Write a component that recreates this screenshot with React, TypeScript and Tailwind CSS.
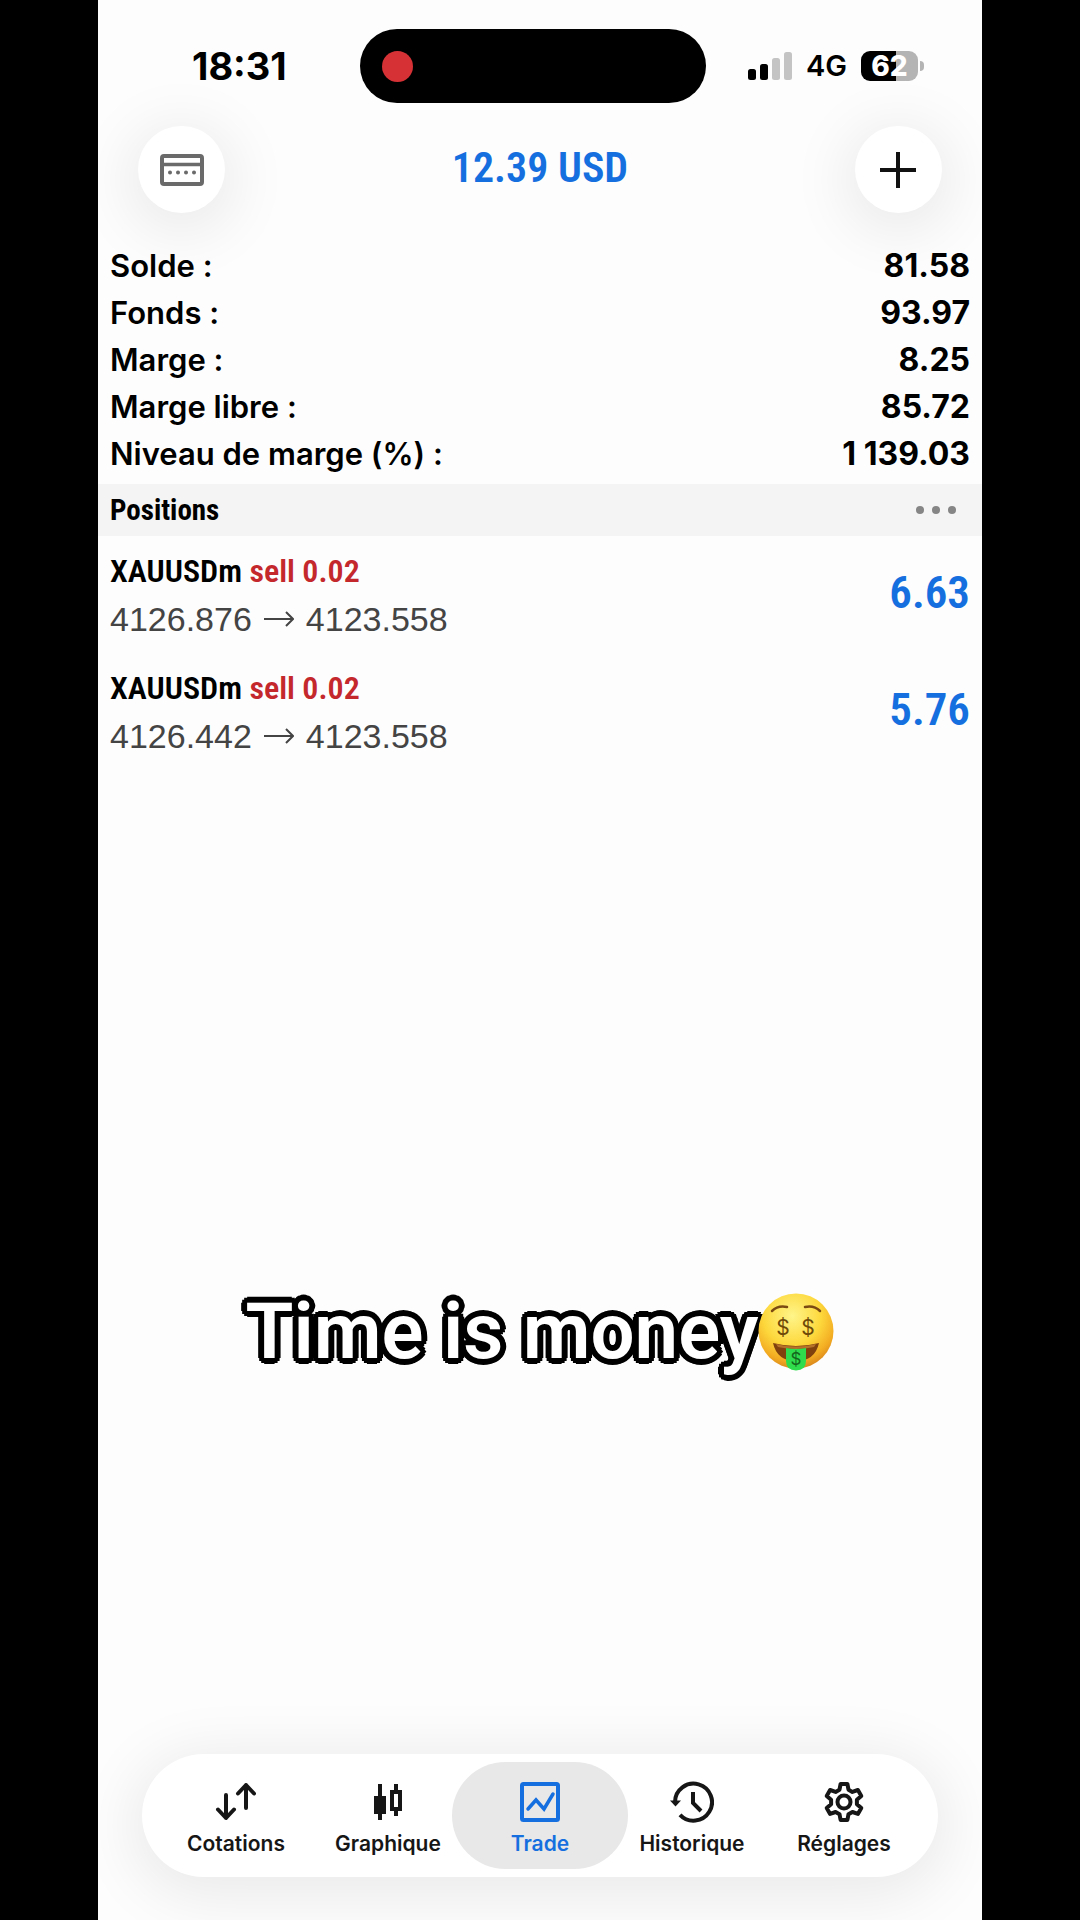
import {useState} from "react";
import type {ReactNode} from "react";

interface Position {
    id: number;
    symbol: string;
    side: string;
    volume: string;
    open: string;
    current: string;
    profit: string;
}

interface Tab {
    name: string;
    icon: ReactNode;
}

const account = [
    {label: "Solde :", value: "81.58"},
    {label: "Fonds :", value: "93.97"},
    {label: "Marge :", value: "8.25"},
    {label: "Marge libre :", value: "85.72"},
    {label: "Niveau de marge (%) :", value: "1\u00a0139.03"},
];

const positions: Position[] = [
    {id: 1, symbol: "XAUUSDm", side: "sell", volume: "0.02", open: "4126.876", current: "4123.558", profit: "6.63"},
    {id: 2, symbol: "XAUUSDm", side: "sell", volume: "0.02", open: "4126.442", current: "4123.558", profit: "5.76"},
];

const tabs: Tab[] = [
    {
        name: "Cotations",
        icon: (
            <svg viewBox="0 0 44 44" className="h-11 w-11" fill="none" stroke="currentColor" strokeWidth="4" strokeLinecap="round" strokeLinejoin="round">
                <path d="M12 15v23M4 29.500l8 8.500 8-8.500M32 28V5M24 13.500L32 5l8 8.500" />
            </svg>
        ),
    },
    {
        name: "Graphique",
        icon: (
            <svg viewBox="0 0 44 44" className="h-11 w-11" fill="none" stroke="currentColor" strokeWidth="4">
                <path d="M14 4v36M30 4v6M30 30v6" />
                <path d="M8 16h12v18H8z" fill="currentColor" stroke="none" />
                <path d="M26 12h8v17h-8z" />
            </svg>
        ),
    },
    {
        name: "Trade",
        icon: (
            <svg viewBox="0 0 44 44" className="h-11 w-11" fill="none" stroke="currentColor" strokeWidth="4">
                <rect x="4" y="4" width="36" height="36" rx="1.500" />
                <path d="M10 29l8-9 8 9 9-15" strokeWidth="3.500" strokeLinecap="round" />
            </svg>
        ),
    },
    {
        name: "Historique",
        icon: (
            <svg viewBox="0 0 44 44" className="h-11 w-11" fill="none" stroke="currentColor" strokeWidth="4">
                <path d="M5 22a18.500 18.500 0 1 1 5 12.800" />
                <path d="M23 12v11l8 8" />
                <path d="M0 20.500h11l-5.500 6z" fill="currentColor" stroke="none" />
            </svg>
        ),
    },
    {
        name: "Réglages",
        icon: (
            <svg viewBox="0 0 44 44" className="h-11 w-11" fill="none" stroke="currentColor" strokeWidth="4" strokeLinejoin="round">
                <path d="M18.600 4h6.800l1.100 5.700 3.900 2.200 5.500-1.900 3.400 5.900-4.400 3.800v4.500l4.400 3.800-3.400 5.900-5.500-1.900-3.900 2.200-1.100 5.800h-6.800l-1.100-5.800-3.900-2.200-5.500 1.900L4.700 28l4.400-3.800v-4.500l-4.400-3.800L8.100 10l5.500 1.900 3.900-2.200z" />
                <circle cx="22" cy="22" r="6.500" />
            </svg>
        ),
    },
];

const StatusBar = () => (
    <div className="grid grid-cols-[minmax(0,1fr)_346px_minmax(0,1fr)] items-center pt-7 pr-3.5">
        <span className="pl-[94px] text-[38px] leading-[76px] font-bold text-black">18:31</span>
        <div className="flex h-[74px] items-center rounded-full bg-black pl-[22px]">
            <span className="h-[31px] w-[31px] rounded-full bg-[#d63236]" />
        </div>
        <div className="flex items-center gap-3.5 pl-[42px]">
            <svg viewBox="0 0 44 28" className="h-7 w-11 shrink-0">
                <rect x="0" y="17" width="8" height="11" rx="2.500" />
                <rect x="12" y="12" width="8" height="16" rx="2.500" />
                <rect x="24" y="6" width="8" height="22" rx="2.500" fill="#c4c4c4" />
                <rect x="36" y="0" width="8" height="28" rx="2.500" fill="#c4c4c4" />
            </svg>
            <span className="text-[29px] leading-8 font-semibold text-black">4G</span>
            <div className="flex items-center gap-0.5">
                <span className="flex h-[30px] w-[57px] shrink-0 items-center justify-center rounded-[9px] bg-linear-to-r from-black from-62% to-[#b4b4b4] to-62% text-[28px] leading-[30px] font-extrabold text-white">
                    62
                </span>
                <span className="h-2.5 w-1 rounded-r-full bg-[#b4b4b4]" />
            </div>
        </div>
    </div>
);

const MoneyFace = () => (
    <svg viewBox="0 0 76 78" className="h-[78px] w-[76px]" role="img" aria-label="money face">
        <defs>
            <radialGradient id="face" cx="0.45" cy="0.3" r="0.7">
                <stop offset="0" stopColor="#fff58a" />
                <stop offset="0.55" stopColor="#fdd83c" />
                <stop offset="0.85" stopColor="#f3ac22" />
                <stop offset="1" stopColor="#dc8a1c" />
            </radialGradient>
        </defs>
        <circle cx="38" cy="38" r="37.500" fill="url(#face)" />
        <path d="M14 18q6-6 15-4M47 14q9-2 15 4" fill="none" stroke="#7a4a12" strokeWidth="2.500" strokeLinecap="round" />
        <path d="M15 50q23 6 46 0-4 18-23 18T15 50z" fill="#80410f" />
        <path d="M18 51q20 5 40 0l-2 3q-18 4-36 0z" fill="#b5712a" />
        <path d="M28 55q10 2 20 0v13q0 9-10 9.500-10-.5-10-9.500z" fill="#2fdc4c" />
        <g fill="#6e4a08" fontFamily="Inter, sans-serif" textAnchor="middle">
            <text x="25" y="42" fontSize="21">$</text>
            <text x="50" y="42" fontSize="21">$</text>
            <text x="38" y="72" fontSize="17" fill="#14661c">$</text>
        </g>
    </svg>
);

const App = () => {
    const [active, setActive] = useState("Trade");

    return (
        <div className="min-h-screen bg-black px-[98px] font-['Inter','Liberation_Sans',sans-serif]">
            <div className="flex min-h-screen flex-col overflow-hidden bg-[#fdfdfd]">
                <StatusBar />

                <header className="mt-[22px] flex items-center justify-between px-10">
                    <button
                        type="button"
                        aria-label="Compte"
                        className="flex h-[87px] w-[87px] items-center justify-center rounded-full bg-white shadow-[0_10px_60px_10px_rgba(0,0,0,0.08)]"
                    >
                        <svg viewBox="0 0 44 32" className="h-8 w-11" fill="none" stroke="#6a6a6a" strokeWidth="4">
                            <rect x="2" y="2" width="40" height="28" rx="2" />
                            <path d="M2 10.500h40" strokeWidth="3.500" />
                            <path d="M10 18.500h.01M18 18.500h.01M26 18.500h.01M34 18.500h.01" strokeLinecap="round" />
                        </svg>
                    </button>
                    <h1 className="pb-1 font-['Roboto_Condensed','Liberation_Sans_Narrow',sans-serif] text-[42px] leading-[50px] font-semibold text-[#166fdf]">
                        12.39 USD
                    </h1>
                    <button
                        type="button"
                        aria-label="Nouvel ordre"
                        className="flex h-[87px] w-[87px] items-center justify-center rounded-full bg-white shadow-[0_10px_60px_10px_rgba(0,0,0,0.08)]"
                    >
                        <svg viewBox="0 0 36 36" className="h-9 w-9" stroke="#111" strokeWidth="4">
                            <path d="M18 0v36M0 18h36" />
                        </svg>
                    </button>
                </header>

                <dl className="px-3 pt-[29px] text-black [font-feature-settings:'calt'_0]">
                    {account.map((row) => (
                        <div key={row.label} className="flex justify-between leading-[47px]">
                            <dt className="text-[31px] font-semibold">{row.label}</dt>
                            <dd className="text-[32px] font-bold">{row.value}</dd>
                        </div>
                    ))}
                </dl>

                <div className="mt-[7px] flex h-[52px] items-center justify-between bg-[#f4f4f4] pr-[26px] pl-3">
                    <h2 className="font-['Roboto_Condensed','Liberation_Sans_Narrow',sans-serif] text-[29px] leading-9 font-bold text-black">Positions</h2>
                    <button type="button" aria-label="Options" className="flex gap-2">
                        <span className="h-2 w-2 rounded-full bg-[#858585]" />
                        <span className="h-2 w-2 rounded-full bg-[#858585]" />
                        <span className="h-2 w-2 rounded-full bg-[#858585]" />
                    </button>
                </div>

                <ul>
                    {positions.map((position) => (
                        <li key={position.id} className="flex h-[117px] items-center justify-between px-3">
                            <div>
                                <p className="font-['Roboto_Condensed','Liberation_Sans_Narrow',sans-serif] text-[32px] leading-[48px] font-semibold text-black">
                                    {position.symbol}{" "}
                                    <span className="text-[#c4282d]">
                                        {position.side} {position.volume}
                                    </span>
                                </p>
                                <p className="flex items-center gap-3 font-['Liberation_Sans',sans-serif] text-[34px] leading-[48px] text-[#444]">
                                    <span>{position.open}</span>
                                    <svg viewBox="0 0 30 16" className="h-4 w-[30px]" fill="none" stroke="currentColor" strokeWidth="2">
                                        <path d="M0 8h29M22 1l7 7-7 7" />
                                    </svg>
                                    <span>{position.current}</span>
                                </p>
                            </div>
                            <span className="pb-1 font-['Roboto_Condensed','Liberation_Sans_Narrow',sans-serif] text-[45px] leading-[54px] font-semibold text-[#166fdf]">
                                {position.profit}
                            </span>
                        </li>
                    ))}
                </ul>

                <main className="flex flex-1 items-center justify-center pt-[140px]">
                    <p className="font-['Roboto',sans-serif] text-[78px] leading-[90px] font-semibold text-white [text-shadow:6px_0_black,5px_3px_black,3px_5px_black,0_6px_black,-3px_5px_black,-5px_3px_black,-6px_0_black,-5px_-3px_black,-3px_-5px_black,0_-6px_black,3px_-5px_black,5px_-3px_black]">
                        Time is money
                    </p>
                    <MoneyFace />
                </main>

                <nav className="mx-11 mb-[43px] grid grid-cols-5 rounded-full bg-white px-[18px] py-2 shadow-[0_10px_60px_10px_rgba(0,0,0,0.08)]">
                    {tabs.map((tab) => (
                        <button
                            key={tab.name}
                            type="button"
                            onClick={() => setActive(tab.name)}
                            className={
                                active === tab.name
                                    ? "-mx-3 flex flex-col items-center gap-2 rounded-full bg-[#e8e8e8] pt-[18px] pb-[13px] text-[#166fdf]"
                                    : "flex flex-col items-center gap-2 pt-[18px] pb-[13px] text-[#161616]"
                            }
                        >
                            {tab.icon}
                            <span className="text-[21px] leading-6 font-semibold">{tab.name}</span>
                        </button>
                    ))}
                </nav>
            </div>
        </div>
    );
};

export default App;
